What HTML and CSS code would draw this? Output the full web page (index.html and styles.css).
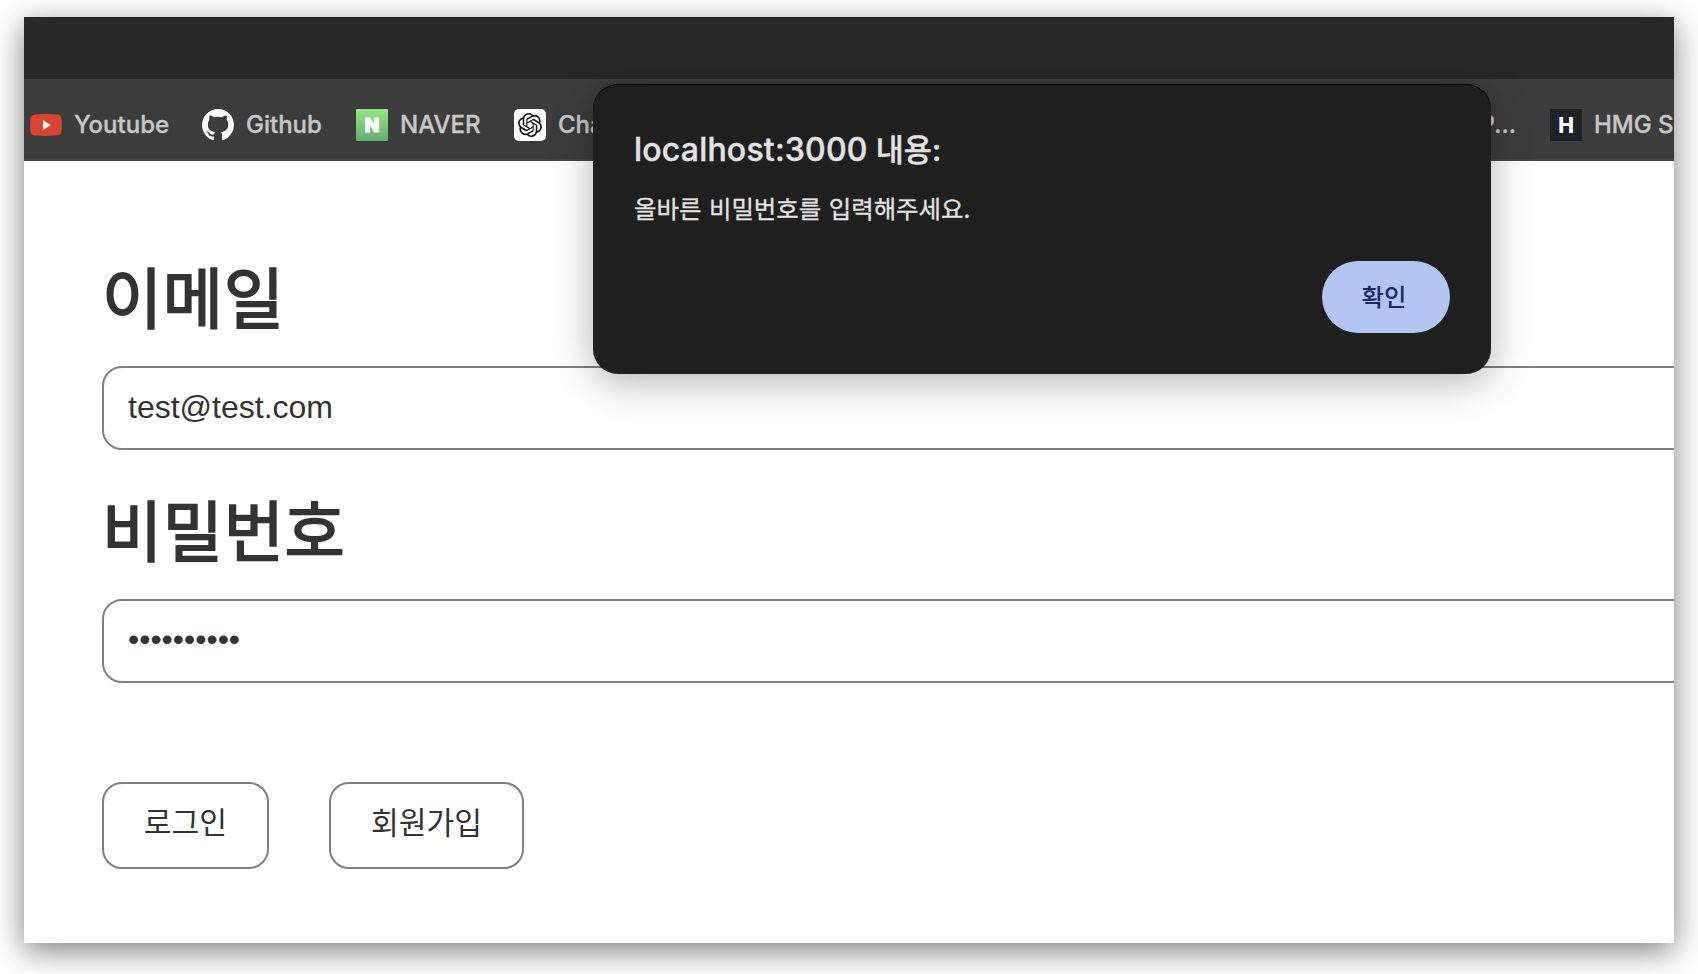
FILE: index.html
```html
<!DOCTYPE html>
<html lang="ko">
<head>
<meta charset="utf-8">
<title>로그인</title>
<link rel="stylesheet" href="styles.css">
</head>
<body>
<div class="window">
  <div class="titlebar"></div>
  <nav class="bookmarks">
    <a class="bookmark bm-youtube">
      <svg class="icon" viewBox="0 0 32 32"><path d="M5 5.4Q16 4.600 27 5.400Q31 5.700 31.500 9.500Q32.100 16 31.500 22.500Q31 26.300 27 26.600Q16 27.400 5 26.600Q1 26.300.5 22.500Q-.1 16 .5 9.500Q1 5.700 5 5.400Z" fill="#d94532"/><path d="M13 11.300v9.600l7.600-4.800z" fill="#fff"/></svg>
      <span class="label">Youtube</span>
    </a>
    <a class="bookmark bm-github">
      <svg class="icon" viewBox="0 0 16 16"><path fill="#fff" d="M8 0C3.580 0 0 3.580 0 8c0 3.540 2.290 6.530 5.470 7.590.4.070.55-.17.55-.38 0-.19-.01-.82-.01-1.490-2.010.37-2.530-.49-2.690-.94-.09-.23-.48-.94-.82-1.130-.28-.15-.68-.52-.01-.53.63-.01 1.080.58 1.230.82.72 1.210 1.870.87 2.330.66.070-.52.28-.87.51-1.070-1.780-.2-3.640-.89-3.640-3.950 0-.87.31-1.590.82-2.150-.08-.2-.36-1.020.08-2.120 0 0 .67-.21 2.200.82.64-.18 1.320-.27 2-.27s1.360.09 2 .27c1.530-1.040 2.200-.82 2.200-.82.44 1.100.16 1.920.08 2.120.51.56.82 1.270.82 2.150 0 3.070-1.870 3.750-3.650 3.950.29.25.54.73.54 1.480 0 1.070-.01 1.930-.01 2.200 0 .21.15.46.55.38A8.010 8.010 0 0 0 16 8c0-4.420-3.580-8-8-8z"/></svg>
      <span class="label">Github</span>
    </a>
    <a class="bookmark bm-naver">
      <span class="icon naver-icon">N</span>
      <span class="label">NAVER</span>
    </a>
    <a class="bookmark bm-chat">
      <span class="icon chat-icon"><svg viewBox="0 0 24 24" width="24" height="24"><path fill="#111" d="M22.2819 9.8211a5.9847 5.9847 0 0 0-.5157-4.9108 6.0462 6.0462 0 0 0-6.5098-2.9A6.0651 6.0651 0 0 0 4.9807 4.1818a5.9847 5.9847 0 0 0-3.9977 2.9 6.0462 6.0462 0 0 0 .7427 7.0966 5.98 5.98 0 0 0 .511 4.9107 6.051 6.051 0 0 0 6.5146 2.9001A5.9847 5.9847 0 0 0 13.2599 24a6.0557 6.0557 0 0 0 5.7718-4.2058 5.9894 5.9894 0 0 0 3.9977-2.9001 6.0557 6.0557 0 0 0-.7475-7.0729zm-9.022 12.6081a4.4755 4.4755 0 0 1-2.8764-1.0408l.1419-.0804 4.7783-2.7582a.7948.7948 0 0 0 .3927-.6813v-6.7369l2.02 1.1686a.071.071 0 0 1 .038.0615v5.5826a4.504 4.504 0 0 1-4.4945 4.4849zm-9.6607-4.1254a4.4708 4.4708 0 0 1-.5346-3.0137l.142.0852 4.783 2.7582a.7712.7712 0 0 0 .7806 0l5.8428-3.3685v2.3324a.0804.0804 0 0 1-.0332.0615L9.74 19.9502a4.4992 4.4992 0 0 1-6.1408-1.6464zM2.3408 7.8956a4.485 4.485 0 0 1 2.3655-1.9728V11.6a.7664.7664 0 0 0 .3879.6765l5.8144 3.3543-2.0201 1.1685a.0757.0757 0 0 1-.071 0l-4.8303-2.7865A4.504 4.504 0 0 1 2.3408 7.872zm16.5963 3.8558L13.1038 8.364 15.1192 7.2a.0757.0757 0 0 1 .071 0l4.8303 2.7913a4.4944 4.4944 0 0 1-.6765 8.1042v-5.6772a.79.79 0 0 0-.407-.667zm2.0107-3.0231l-.142-.0852-4.7735-2.7818a.7759.7759 0 0 0-.7854 0L9.409 9.2297V6.8974a.0662.0662 0 0 1 .0284-.0615l4.8303-2.7866a4.4992 4.4992 0 0 1 6.6802 4.66zM8.3065 12.863l-2.02-1.1638a.0804.0804 0 0 1-.038-.0567V6.0742a4.4992 4.4992 0 0 1 7.3757-3.4537l-.142.0805L8.704 5.459a.7948.7948 0 0 0-.3927.6813zm1.0976-2.3654l2.602-1.4998 2.6069 1.4998v2.9994l-2.5974 1.4997-2.6067-1.4997Z"/></svg></span>
      <span class="label">Cha</span>
    </a>
    <a class="bookmark bm-cut"><span class="label">P...</span></a>
    <a class="bookmark bm-hmg">
      <span class="icon hmg-icon">H</span>
      <span class="label">HMG S</span>
    </a>
  </nav>
  <main class="page">
    <div class="field-label">이메일</div>
    <div class="field">test@test.com</div>
    <div class="field-label">비밀번호</div>
    <div class="field password">••••••••••</div>
    <div class="actions">
      <button class="btn btn-login">로그인</button>
      <button class="btn btn-join">회원가입</button>
    </div>
  </main>
</div>
<div class="dialog">
  <div class="dialog-title"><span class="host">localhost:3000</span> 내용:</div>
  <div class="dialog-text">올바른 비밀번호를 입력해주세요.</div>
  <button class="confirm">확인</button>
</div>
</body>
</html>
```
FILE: styles.css
```css
* { box-sizing: border-box; }
body {
  margin: 0;
  width: 1698px;
  height: 974px;
  padding: 17px 24px 31px;
  background: #fff;
  overflow: hidden;
  position: relative;
  font-family: Inter, "Noto Sans CJK KR", sans-serif;
}
.window {
  height: 926px;
  background: #fff;
  box-shadow: 0 8px 30px rgba(0, 0, 0, .5);
  display: flex;
  flex-direction: column;
}
.titlebar { height: 62px; background: #282828; flex: none; }
.bookmarks {
  height: 82px;
  flex: none;
  background: #3c3c3c;
  border-bottom: 2px solid #474546;
  padding: 12px 0 0 6px;
  display: flex;
  align-items: center;
  overflow: hidden;
}
.bookmark { display: flex; align-items: center; flex: none; gap: 12px; }
.bm-youtube { width: 172px; }
.bm-github { width: 154px; }
.bm-naver { width: 158px; }
.bm-chat { width: 160px; }
.bm-cut { width: 842px; justify-content: flex-end; }
.bm-hmg { margin-left: 34px; }
.icon { width: 32px; height: 32px; flex: none; display: flex; align-items: center; justify-content: center; }
.naver-icon {
  border-radius: 1px;
  background: linear-gradient(#93ea84, #66ad70);
  color: #fff;
  font-size: 19px;
  font-weight: 900;
  -webkit-text-stroke: .8px #fff;
}
.chat-icon { background: #fff; border-radius: 5px; }
.hmg-icon { background: #202126; color: #fff; font-size: 21px; font-weight: 800; }
.label {
  color: #c7c7c7;
  font-size: 24px;
  font-weight: 500;
  line-height: 32px;
  white-space: nowrap;
  -webkit-text-stroke: .35px #c7c7c7;
}
.page { flex: 1; padding: 87px 0 0 78px; overflow: hidden; }
.field-label {
  height: 118px;
  font-family: "Noto Sans CJK KR", sans-serif;
  font-size: 65.500px;
  line-height: 94px;
  letter-spacing: .6px;
  color: #333;
  -webkit-text-stroke: 1.8px #333;
}
.field {
  height: 84px;
  width: 1700px;
  margin-bottom: 31px;
  border: 2px solid #808080;
  border-radius: 20px;
  padding: 0 24px;
  font-family: "Liberation Sans", Arial, sans-serif;
  font-size: 32px;
  line-height: 79px;
  color: #333;
}
.password { line-height: 77px; }
.actions { display: flex; gap: 60px; padding-top: 68px; }
.btn {
  height: 87px;
  padding: 0 0 9px;
  background: #fff;
  border: 2px solid #808080;
  border-radius: 20px;
  font-family: "Noto Sans CJK KR", sans-serif;
  font-size: 30.200px;
  color: #333;
}
.btn-login { width: 167px; }
.btn-join { width: 195px; }
.dialog {
  position: absolute;
  left: 593px;
  top: 84px;
  width: 898px;
  height: 290px;
  padding: 43px 41px 41px;
  background: #1f1f1f;
  border-radius: 25px;
  box-shadow: inset 0 1px 0 #000, 0 8px 40px rgba(0, 0, 0, .3);
  display: flex;
  flex-direction: column;
}
.dialog-title {
  font-size: 30.500px;
  font-weight: 500;
  line-height: 46px;
  color: #e3e3e3;
  white-space: nowrap;
  -webkit-text-stroke: .4px #e3e3e3;
}
.host { font-size: 32px; letter-spacing: .2px; }
.dialog-text {
  margin-top: 17px;
  font-family: "Noto Sans CJK KR", sans-serif;
  font-size: 24.400px;
  line-height: 36px;
  word-spacing: .8px;
  color: #e3e3e3;
  white-space: nowrap;
  -webkit-text-stroke: .3px #e3e3e3;
}
.confirm {
  margin-top: auto;
  align-self: flex-end;
  width: 128px;
  height: 72px;
  padding: 0 4px 4px 0;
  border: 0;
  border-radius: 36px;
  background: #b3c5f3;
  color: #182a68;
  font-family: "Noto Sans CJK KR", sans-serif;
  font-size: 24.400px;
  font-weight: 500;
}
```
